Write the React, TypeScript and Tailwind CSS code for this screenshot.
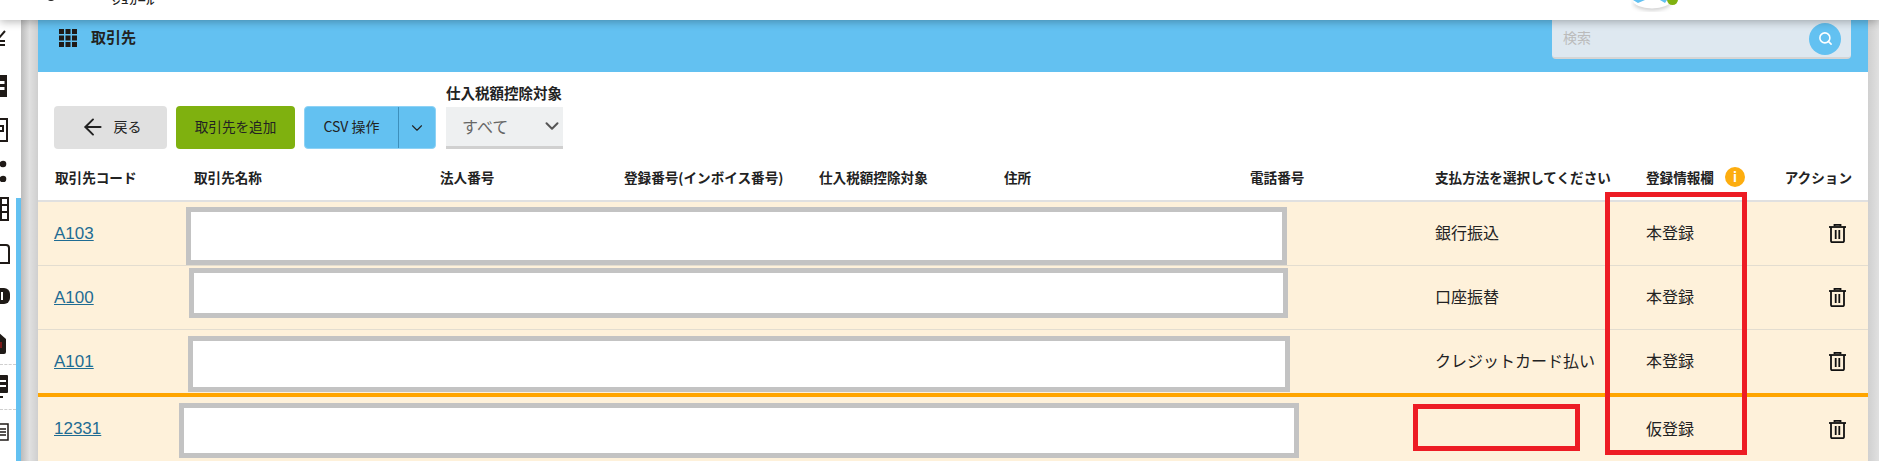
import { ArrowLeft, ChevronDown, Search } from "lucide-react";

const jp = "font-['Noto_Sans_CJK_JP','Noto_Sans',sans-serif]";

const columns = [
  "取引先コード",
  "取引先名称",
  "法人番号",
  "登録番号(インボイス番号)",
  "仕入税額控除対象",
  "住所",
  "電話番号",
  "支払方法を選択してください",
];

const rows = [
  { code: "A103", pay: "銀行振込", status: "本登録", h: "h-[64px] border-b border-[#e3ddd0]" },
  { code: "A100", pay: "口座振替", status: "本登録", h: "h-[64px] border-b border-[#e3ddd0]" },
  { code: "A101", pay: "クレジットカード払い", status: "本登録", h: "h-[67px] border-b-4 border-[#ffa500]" },
  { code: "12331", pay: "", status: "仮登録", h: "h-[64px]" },
];

const gridCols =
  "grid grid-cols-[139px_246px_184px_195px_185px_246px_185px_211px_138px_1fr]";

function TrashIcon() {
  return (
    <svg width="17" height="19" viewBox="0 0 17 19" fill="none" stroke="#111" strokeWidth="1.800">
      <path d="M0 3h17" />
      <path d="M5.500 2V.800h6V2" />
      <path d="M2 3v14a1.200 1.200 0 0 0 1.200 1.200h10.600A1.200 1.200 0 0 0 15 17V3" />
      <path d="M6.700 6v9M10.300 6v9" />
    </svg>
  );
}

function GridIcon() {
  return (
    <svg width="18" height="18" viewBox="0 0 18 18" fill="#1f1a17">
      {[0, 6.500, 13].map((y) =>
        [0, 6.500, 13].map((x) => <rect key={`${x}-${y}`} x={x} y={y} width="5" height="5" />)
      )}
    </svg>
  );
}

// the nav is scrolled off to the left, only the right ends of its icons show
function Sidebar() {
  return (
    <div className="relative w-[21px] shrink-0 bg-white pr-[5px] overflow-hidden">
      <div className="absolute right-0 top-[178px] bottom-0 w-[5px] bg-[#63c1f1]" />
      <svg className="mt-[10px]" width="6" height="18" viewBox="0 0 6 18" fill="none" stroke="#1f1a17" strokeWidth="2">
        <path d="M-2 9 5 1M-2 11h7M-2 15h7" />
      </svg>
      <svg className="mt-[27px]" width="8" height="22" viewBox="0 0 8 22" fill="#1f1a17">
        <path d="M0 0h7v22H0z" />
        <path d="M0 6h4.500v3H0zM0 12h4.500v3H0z" fill="#fff" />
      </svg>
      <svg className="mt-[21px]" width="8" height="24" viewBox="0 0 8 24" fill="none" stroke="#1f1a17" strokeWidth="2">
        <path d="M-2 1h9v22h-9" />
        <path d="M-2 8h5v5h-5" />
      </svg>
      <svg className="mt-[18px]" width="8" height="22" viewBox="0 0 8 22" fill="#1f1a17">
        <circle cx="3" cy="4" r="3.300" />
        <circle cx="3" cy="19" r="3.300" />
      </svg>
      <svg className="mt-[15px]" width="9" height="24" viewBox="0 0 9 24" fill="none" stroke="#1f1a17" strokeWidth="2">
        <path d="M-2 1h10v22h-10M-2 8h10M-2 15h10M1 1v22" />
      </svg>
      <svg className="mt-[23px]" width="10" height="21" viewBox="0 0 10 21" fill="none" stroke="#1f1a17" strokeWidth="2">
        <path d="M-2 1h8a3 3 0 0 1 3 3v15h-11" />
      </svg>
      <svg className="mt-[23px]" width="10" height="16" viewBox="0 0 10 16" fill="#1f1a17">
        <path d="M-2 0h6a6 6 0 0 1 6 6v4a6 6 0 0 1-6 6h-6z" />
        <path d="M1 4h2v8H1z" fill="#fff" />
      </svg>
      <svg className="mt-[28px]" width="7" height="22" viewBox="0 0 7 22" fill="#1f1a17">
        <path d="M-2 0 6 7v13a2 2 0 0 1-2 2h-6z" />
        <path d="M0 10h2v6H0z" fill="#7a1a1a" />
      </svg>
      <div className="mt-[10px] border-t border-dashed border-[#cfcfcf]" />
      <svg className="mt-[10px]" width="9" height="24" viewBox="0 0 9 24" fill="#1f1a17">
        <path d="M-2 0h9a1 1 0 0 1 1 1v16a1 1 0 0 1-1 1h-9z" />
        <path d="M0 5h6v2H0zM0 10h6v2H0z" fill="#fff" />
        <path d="M0 21h3v2H0z" />
      </svg>
      <div className="mt-[10px] border-t border-dashed border-[#cfcfcf]" />
      <svg className="mt-[13px]" width="10" height="19" viewBox="0 0 10 19" fill="none" stroke="#1f1a17" strokeWidth="1.500">
        <path d="M-2 1h10v16h-10M0 6h6M0 9h6M0 12h6" />
      </svg>
    </div>
  );
}

export default function App() {
  return (
    <div className={`relative flex flex-col w-full h-[461px] overflow-hidden bg-white text-[#222] ${jp}`}>
      {/* top bar, mostly scrolled away */}
      <div className="relative z-10 h-5 shrink-0 bg-white shadow-[0_2px_9px_rgba(0,0,0,0.28)]">
        <div className="absolute left-[47px] top-[-7px] w-[8px] h-[8px] rounded-full bg-[#222]" />
        <span className="absolute left-[112px] top-[-7px] text-[8.500px] font-bold leading-[14px]">シュガール</span>
        <svg className="absolute left-[1631px] top-0" width="42" height="12" viewBox="0 0 42 12">
          <path d="M2 0a19 8.500 0 0 0 38 0z" fill="#fff" style={{ filter: "drop-shadow(0 2px 2px rgba(0,0,0,0.2))" }} />
          <path d="M2 0h12L7 3zM29 0h7l-2 3z" fill="#63c1f1" />
        </svg>
        <div className="absolute left-[1667px] top-[-6px] w-[11px] h-[11px] rounded-full bg-[#7fb10f]" />
      </div>

      <div className="flex flex-1 min-h-0">
        <Sidebar />
        <div className="w-[17px] shrink-0 bg-gradient-to-r from-[#bcbcbc] via-[#e0e0e0] to-[#cfcfcf]" />

        <div className="flex-1 min-w-0 flex flex-col">
          <div className="h-[52px] shrink-0 flex justify-between pl-[21px] pr-[17px] bg-[#63c1f1]">
            <div className="flex items-center gap-[14px] h-[35px]">
              <GridIcon />
              <span className="text-[15px] font-bold">取引先</span>
            </div>
            <div className="flex items-center justify-between w-[299px] h-[39px] pl-[11px] pr-[10px] rounded-b bg-[#dee8f0] border-b-2 border-[#d5d5d5]">
              <span className="text-[14px] text-[#bbb] pb-[2px]">検索</span>
              <div className="flex items-center justify-center w-8 h-8 rounded-full bg-[#63c1f1]">
                <Search size={15} color="#fff" strokeWidth={2.500} />
              </div>
            </div>
          </div>

          <div className="h-[93px] shrink-0 pl-4 flex items-end gap-[9px] pb-[16px]">
            <button className="flex items-center justify-center gap-2 w-[113px] h-[43px] pb-[2px] rounded bg-[#e0e0e0] text-[14px]">
              <ArrowLeft size={26} strokeWidth={1.800} />
              戻る
            </button>
            <button className="w-[119px] h-[43px] pb-[2px] rounded bg-[#7fb10f] text-[13.600px]">取引先を追加</button>
            <div className="flex h-[43px] w-[132px] rounded bg-[#63c1f1] border border-[#8ed2f5] text-[14px]">
              <span className="flex items-center justify-center w-[94px] pb-[3px] border-r border-[#3d8fbb]">CSV 操作</span>
              <span className="flex items-center justify-center flex-1">
                <ChevronDown size={18} strokeWidth={1.500} />
              </span>
            </div>
            <div className="flex flex-col gap-[4px] ml-px">
              <span className="text-[14.500px] font-bold leading-[20px]">仕入税額控除対象</span>
              <div className="flex items-center justify-between w-[117px] h-[42px] pl-4 pb-[2px] bg-[#eef0f1] border-b-[3px] border-[#d0d0d0] text-[16px] text-[#666]">
                すべて
                <ChevronDown size={22} strokeWidth={2.200} color="#555" />
              </div>
            </div>
          </div>

          <div className={`${gridCols} items-center h-[24px] mb-[11px] shrink-0 pl-[17px] text-[13.600px] font-bold`}>
            {columns.map((c) => (
              <span key={c} className="whitespace-nowrap">{c}</span>
            ))}
            <span className="flex items-center gap-[11px] whitespace-nowrap">
              登録情報欄
              <span className="flex items-center justify-center w-5 h-5 rounded-full bg-[#fdad0f] text-white text-[13px] font-bold">i</span>
            </span>
            <span className="justify-self-end pr-[16px] whitespace-nowrap">アクション</span>
          </div>
          <div className="h-[2px] shrink-0 bg-[#e0e0e0]" />

          <div className="flex-1 bg-[#fef1da]">
            {rows.map((r) => (
              <div key={r.code} className={`${gridCols} items-center pl-[17px] text-[16px] ${r.h}`}>
                <a className="col-span-7 -ml-px underline text-[#1f6c93] text-[17px] font-['Liberation_Sans',sans-serif]">{r.code}</a>
                <span className="whitespace-nowrap pb-[3px]">{r.pay}</span>
                <span className="pb-[3px]">{r.status}</span>
                <span className="justify-self-end pr-[22px] flex">
                  <TrashIcon />
                </span>
              </div>
            ))}
          </div>
        </div>

        <div className="w-[11px] shrink-0 bg-gradient-to-r from-[#d0d0d0] to-[#e0e0e0]" />
      </div>

      {/* annotations drawn on top of the screenshot */}
      <div className="absolute left-[186px] top-[207px] w-[1101px] h-[58px] bg-white border-[5px] border-[#c3c3c3]" />
      <div className="absolute left-[189px] top-[268px] w-[1099px] h-[50px] bg-white border-[5px] border-[#c3c3c3]" />
      <div className="absolute left-[188px] top-[336px] w-[1102px] h-[56px] bg-white border-[5px] border-[#c3c3c3]" />
      <div className="absolute left-[179px] top-[403px] w-[1120px] h-[55px] bg-white border-[5px] border-[#c3c3c3]" />
      <div className="absolute left-[1605px] top-[192px] w-[142px] h-[263px] border-[5px] border-[#ed1c24]" />
      <div className="absolute left-[1413px] top-[404px] w-[167px] h-[47px] border-[5px] border-[#ed1c24]" />
    </div>
  );
}
